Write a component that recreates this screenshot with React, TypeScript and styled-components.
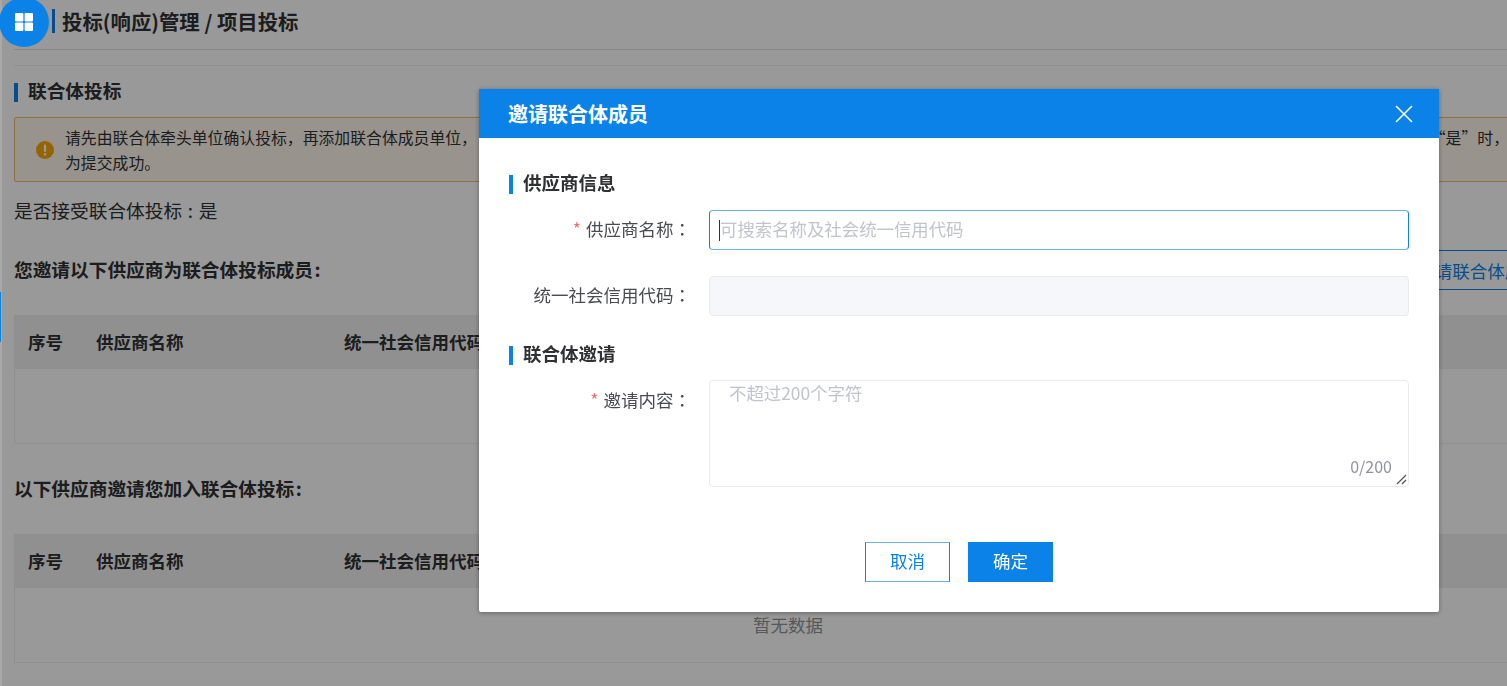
import React from 'react'
import styled, { createGlobalStyle } from 'styled-components'
import { X } from 'lucide-react'

const GlobalStyle = createGlobalStyle`
  html, body {
    margin: 0;
    padding: 0;
    background: #fff;
    overflow: hidden;
  }
  body {
    font-family: "Noto Sans CJK SC", "Liberation Sans", sans-serif;
    color: #303133;
  }
  * {
    box-sizing: border-box;
  }
`

const Screen = styled.div`
  width: 1507px;
  height: 686px;
  overflow: hidden;
  display: flex;
  position: relative;
`

const Rail = styled.div`
  width: 2px;
  flex: none;
  height: 686px;
  padding-top: 292px;
  background: #a9a9a9;
  position: relative;
  z-index: 3;
`

const RailMark = styled.div`
  width: 1px;
  height: 50px;
  background: #0a82e8;
`

const Page = styled.div`
  width: 1572px;
  flex: none;
  padding: 0 12px;
`

const Header = styled.header`
  height: 50px;
  display: flex;
  align-items: center;
  padding-left: 38px;
  padding-bottom: 8px;
  border-bottom: 1px solid #dcdfe6;
  font-size: 20.4px;
  font-weight: 700;
  color: #303133;
`

const HeaderBar = styled.span`
  width: 3px;
  height: 24px;
  background: #0a82e8;
  margin-right: 7px;
`

const Divider = styled.div`
  height: 16px;
  border-bottom: 1px solid #ebeef5;
`

const SectionTitle = styled.h2`
  margin: 16px 0 0;
  height: 20px;
  padding-bottom: 4px;
  display: flex;
  align-items: center;
  font-size: 18.7px;
  font-weight: 700;
  line-height: 20px;
  color: #303133;
`

const SectionBar = styled.span`
  width: 4px;
  height: 19px;
  background: #0a82e8;
  margin-top: 4px;
  margin-right: 10px;
`

const Alert = styled.div`
  margin-top: 15px;
  height: 65px;
  display: flex;
  align-items: center;
  padding: 0 0 0 21px;
  background: #fdf6ec;
  border: 1px solid #f0b775;
  border-radius: 2px;
`

const AlertIcon = styled.svg`
  width: 18px;
  height: 18px;
  flex: none;
  margin-right: 11px;
`

const AlertText = styled.div`
  flex: 1;
  padding-top: 2px;
  font-size: 15.85px;
  line-height: 24.5px;
  color: #303133;
`

const AlertLine = styled.div`
  display: flex;
  justify-content: space-between;
  padding-right: 52px;
  white-space: nowrap;
`

const Accept = styled.p`
  margin: 15px 0 0;
  height: 25px;
  font-size: 18.7px;
  line-height: 25px;
  word-spacing: 1.5px;
  color: #303133;
`

const TableTop = styled.div<{ $gap: number }>`
  margin-top: ${(p) => p.$gap}px;
  height: 40px;
  display: flex;
  align-items: center;
  justify-content: space-between;
`

const TableTitle = styled.h3`
  margin: 0;
  padding-bottom: 4px;
  font-size: 18.7px;
  font-weight: 700;
  color: #303133;
`

const TitleColon = styled.span`
  margin-left: 1.5px;
`

const OutlineButton = styled.button`
  height: 40px;
  width: 167px;
  padding: 0;
  background: #fff;
  border: 1px solid #0a82e8;
  color: #0a82e8;
  font-family: inherit;
  font-size: 17.5px;
`

const Table = styled.div<{ $gap: number }>`
  margin-top: ${(p) => p.$gap}px;
  border: 1px solid #ebeef5;
`

const HeadRow = styled.div`
  height: 53px;
  display: grid;
  grid-template-columns: 68px 247px 1fr;
  background: #f0f0f0;
  border-bottom: 1px solid #ebeef5;
`

const HeadCell = styled.div`
  display: flex;
  align-items: center;
  padding-left: 13px;
  padding-bottom: 2px;
  font-size: 17.5px;
  font-weight: 700;
  color: #303133;
  & + & {
    border-left: 1px solid #ebeef5;
    padding-left: 12px;
  }
  & + & + & {
    padding-left: 13px;
  }
`

const EmptyRow = styled.div`
  height: 74px;
  padding-bottom: 2px;
  display: flex;
  align-items: center;
  justify-content: center;
  font-size: 17.5px;
  color: #909399;
`

const Overlay = styled.div`
  position: fixed;
  inset: 0;
  background: rgba(0, 0, 0, 0.4);
  z-index: 2;
`

const Launcher = styled.div`
  position: fixed;
  left: -1px;
  top: -3px;
  width: 50px;
  height: 50px;
  border-radius: 50%;
  background: #0a82e8;
  display: flex;
  align-items: center;
  justify-content: center;
  z-index: 4;
`

const Modal = styled.div`
  position: fixed;
  left: 479px;
  top: 89px;
  width: 960px;
  background: #fff;
  border-radius: 0 0 2px 2px;
  box-shadow: 0 1px 5px rgba(0, 0, 0, 0.35);
  z-index: 5;
`

const ModalHead = styled.div`
  height: 49px;
  display: flex;
  align-items: center;
  justify-content: space-between;
  padding: 0 20px 0 29px;
  background: #0a82e8;
  color: #fff;
  font-size: 20px;
  font-weight: 700;
`

const ModalBody = styled.div`
  padding: 36px 30px 30px;
`

const ModalSection = styled.div<{ $gap?: number }>`
  margin-top: ${(p) => p.$gap ?? 0}px;
  height: 20px;
  padding-bottom: 4px;
  display: flex;
  align-items: center;
  font-size: 18.5px;
  font-weight: 700;
  color: #303133;
`

const FormRow = styled.div<{ $gap: number }>`
  margin-top: ${(p) => p.$gap}px;
  display: grid;
  grid-template-columns: 182px 700px;
  column-gap: 18px;
  align-items: start;
`

const Label = styled.label<{ $tall?: boolean }>`
  height: 40px;
  padding-bottom: ${(p) => (p.$tall ? 2 : 4)}px;
  display: flex;
  align-items: center;
  justify-content: flex-end;
  font-size: 17.5px;
  color: #4a4c50;
  white-space: nowrap;
`

const Star = styled.span`
  color: #f56c6c;
  margin-right: 5px;
`

const Colon = styled.span`
  font-family: "Noto Sans CJK TC", sans-serif;
`

const TextInput = styled.div<{ $disabled?: boolean }>`
  height: 40px;
  display: flex;
  align-items: center;
  padding: 0 0 4px 9px;
  border: 1px solid ${(p) => (p.$disabled ? '#e8eaf0' : '#0a82e8')};
  border-top-color: ${(p) => (p.$disabled ? '#e8eaf0' : '#69b1f0')};
  border-bottom-color: ${(p) => (p.$disabled ? '#e8eaf0' : '#69b1f0')};
  border-radius: 4px;
  background: ${(p) => (p.$disabled ? '#f5f7fa' : '#fff')};
  font-size: 17.4px;
  color: #c0c4cc;
`

const Caret = styled.span`
  width: 1px;
  height: 21px;
  margin-top: 4px;
  background: #303133;
`

const TextArea = styled.div`
  height: 107px;
  padding: 1px 19px 0;
  position: relative;
  border: 1px solid #e8eaf0;
  border-radius: 4px;
  font-size: 17.4px;
  line-height: 22px;
  color: #c0c4cc;
`

const Counter = styled.span`
  position: absolute;
  right: 16px;
  bottom: 10px;
  font-size: 16px;
  line-height: 20px;
  color: #909399;
`

const Grip = styled.svg`
  position: absolute;
  right: 1px;
  bottom: 1px;
  width: 11px;
  height: 11px;
`

const Footer = styled.div`
  margin-top: 55px;
  display: flex;
  justify-content: center;
  gap: 18px;
`

const DialogButton = styled.button<{ $primary?: boolean }>`
  width: 85px;
  height: 40px;
  padding: 0 0 4px;
  border: 1px solid #0a82e8;
  border-top-color: ${(p) => (p.$primary ? '#0a82e8' : '#69b1f0')};
  border-bottom-color: ${(p) => (p.$primary ? '#0a82e8' : '#69b1f0')};
  background: ${(p) => (p.$primary ? '#0a82e8' : '#fff')};
  color: ${(p) => (p.$primary ? '#fff' : '#0a82e8')};
  font-family: inherit;
  font-size: 17.5px;
`

function GridIcon() {
  return (
    <svg width="18" height="18" viewBox="0 0 18 18" fill="#fff">
      <rect x="0" y="0" width="8.4" height="8.4" rx="1" />
      <rect x="9.6" y="0" width="8.4" height="8.4" rx="1" />
      <rect x="0" y="9.6" width="8.4" height="8.4" rx="1" />
      <rect x="9.6" y="9.6" width="8.4" height="8.4" rx="1" />
    </svg>
  )
}

const columns = ['序号', '供应商名称', '统一社会信用代码']

function BidTable({ gap, empty }: { gap: number; empty?: string }) {
  return (
    <Table $gap={gap}>
      <HeadRow>
        {columns.map((c) => (
          <HeadCell key={c}>{c}</HeadCell>
        ))}
      </HeadRow>
      <EmptyRow>{empty}</EmptyRow>
    </Table>
  )
}

export default function App() {
  return (
    <Screen>
      <GlobalStyle />
      <Rail>
        <RailMark />
      </Rail>
      <Page>
        <Header>
          <HeaderBar />
          投标(响应)管理 / 项目投标
        </Header>
        <Divider />
        <SectionTitle>
          <SectionBar />
          联合体投标
        </SectionTitle>
        <Alert>
          <AlertIcon viewBox="0 0 18 18">
            <circle cx="9" cy="9" r="9" fill="#f5a700" />
            <rect x="7.9" y="3.5" width="2.2" height="7.5" rx="1" fill="#fff" />
            <circle cx="9" cy="13.2" r="1.3" fill="#fff" />
          </AlertIcon>
          <AlertText>
            <AlertLine>
              <span>请先由联合体牵头单位确认投标，再添加联合体成员单位，</span>
              <span>“是”时，</span>
            </AlertLine>
            <AlertLine>为提交成功。</AlertLine>
          </AlertText>
        </Alert>
        <Accept>是否接受联合体投标 : 是</Accept>
        <TableTop $gap={28}>
          <TableTitle>
            您邀请以下供应商为联合体投标成员<TitleColon>:</TitleColon>
          </TableTitle>
          <OutlineButton>邀请联合体成员</OutlineButton>
        </TableTop>
        <BidTable gap={25} />
        <TableTop $gap={25}>
          <TableTitle>
            以下供应商邀请您加入联合体投标<TitleColon>:</TitleColon>
          </TableTitle>
        </TableTop>
        <BidTable gap={25} empty="暂无数据" />
      </Page>
      <Overlay />
      <Launcher>
        <GridIcon />
      </Launcher>
      <Modal>
        <ModalHead>
          邀请联合体成员
          <X size={30} strokeWidth={1.3} color="#fff" />
        </ModalHead>
        <ModalBody>
          <ModalSection>
            <SectionBar />
            供应商信息
          </ModalSection>
          <FormRow $gap={16}>
            <Label>
              <Star>*</Star>供应商名称<Colon>：</Colon>
            </Label>
            <TextInput>
              <Caret />
              可搜索名称及社会统一信用代码
            </TextInput>
          </FormRow>
          <FormRow $gap={26}>
            <Label>
              统一社会信用代码<Colon>：</Colon>
            </Label>
            <TextInput $disabled />
          </FormRow>
          <ModalSection $gap={29}>
            <SectionBar />
            联合体邀请
          </ModalSection>
          <FormRow $gap={15}>
            <Label $tall>
              <Star>*</Star>邀请内容<Colon>：</Colon>
            </Label>
            <TextArea>
              不超过200个字符
              <Counter>0/200</Counter>
              <Grip viewBox="0 0 11 11" stroke="#555" strokeWidth="1.2">
                <line x1="1" y1="10" x2="10" y2="1" />
                <line x1="6" y1="10" x2="10" y2="6" />
              </Grip>
            </TextArea>
          </FormRow>
          <Footer>
            <DialogButton>取消</DialogButton>
            <DialogButton $primary>确定</DialogButton>
          </Footer>
        </ModalBody>
      </Modal>
    </Screen>
  )
}
